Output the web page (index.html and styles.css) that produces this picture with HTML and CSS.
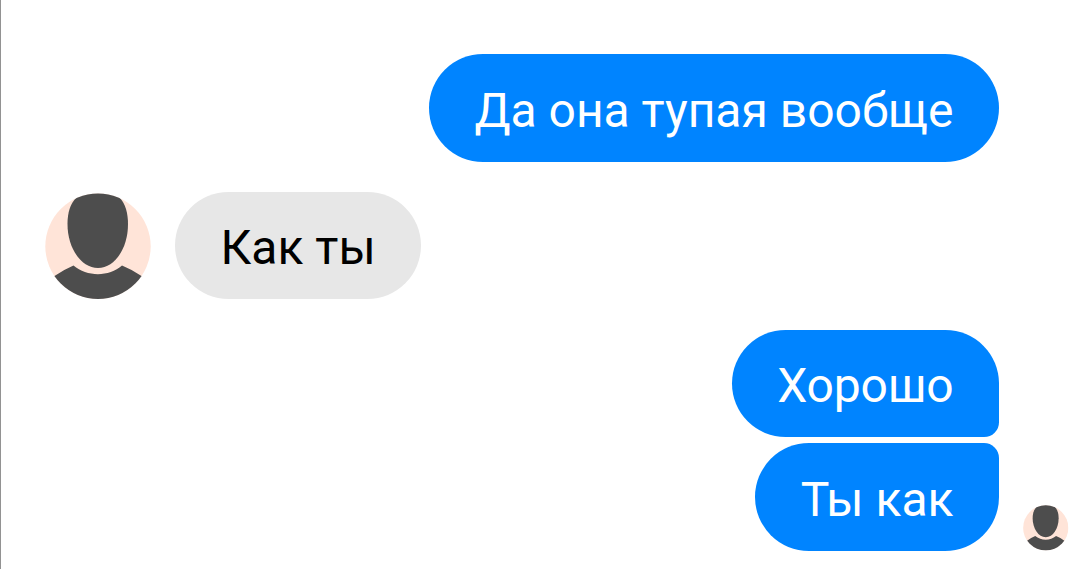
FILE: index.html
```html
<!DOCTYPE html>
<html lang="ru">
<head>
<meta charset="utf-8">
<title>Чат</title>
<link rel="stylesheet" href="styles.css">
</head>
<body>
<svg class="defs" width="0" height="0" aria-hidden="true">
  <symbol id="person" viewBox="0 0 106 106">
    <clipPath id="round"><circle cx="53" cy="53.300" r="52.700"/></clipPath>
    <g clip-path="url(#round)">
      <rect width="106" height="106" fill="#ffe4d8"/>
      <path fill="#4d4d4d" d="M40 0L31.500 4.500C25 11 22.500 20 22.500 31C22.500 55 36 75 53 75C70 75 83 55 83 31C83 20 80.500 11 74.500 4.500L66 0Z"/>
      <path fill="#4d4d4d" d="M0 88L9.500 83Q18 77 28.500 72.500C42 84 64 84 77 72.500Q88 77 96.500 83L106 88V106H0Z"/>
    </g>
  </symbol>
</svg>
<main class="chat">
  <div class="row row-out">
    <div class="bubble out">Да она тупая вообще</div>
  </div>
  <div class="row row-in">
    <svg class="avatar"><use href="#person"/></svg>
    <div class="bubble in">Как ты</div>
  </div>
  <div class="row row-out">
    <div class="group">
      <div class="bubble out first">Хорошо</div>
      <div class="bubble out last">Ты как</div>
    </div>
    <svg class="seen"><use href="#person"/></svg>
  </div>
</main>
</body>
</html>
```
FILE: styles.css
```css
body {
  margin: 0;
  background: #fff;
  font-family: Roboto, "Noto Sans", sans-serif;
}

.defs {
  position: absolute;
}

.chat {
  box-sizing: border-box;
  height: 569px;
  padding: 54.200px 0 0 44.400px;
  border-left: 1px solid #929292;
  display: flex;
  flex-direction: column;
  gap: 30.400px;
  overflow: hidden;
}

.row {
  display: flex;
  align-items: flex-end;
}

.row-out {
  justify-content: flex-end;
  padding-right: 81px;
}

.row-out:has(.seen) {
  padding-right: 11.500px;
  gap: 24px;
}

.row-in {
  gap: 23.600px;
}

.group {
  display: flex;
  flex-direction: column;
  align-items: flex-end;
  gap: 6.300px;
}

.bubble {
  box-sizing: border-box;
  height: 107.400px;
  padding: 0 45.500px;
  border-radius: 54px;
  font-size: 48px;
  line-height: 113px;
  white-space: nowrap;
}

.out {
  background: #0084ff;
  color: #fff;
}

.in {
  background: #e7e7e7;
  color: #000;
  line-height: 111px;
}

.first {
  border-bottom-right-radius: 15px;
  letter-spacing: -0.2px;
  line-height: 111px;
}

.last {
  border-top-right-radius: 15px;
}

.avatar {
  width: 106px;
  height: 106px;
}

.seen {
  width: 45.500px;
  height: 45.500px;
}
```
